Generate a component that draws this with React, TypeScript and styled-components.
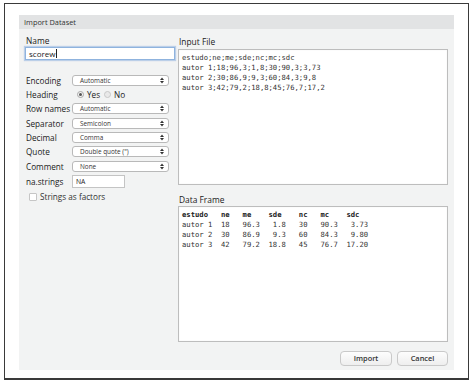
import * as React from 'react'
import styled, { createGlobalStyle } from 'styled-components'

const GlobalStyle = createGlobalStyle`
  html, body {
    margin: 0;
    padding: 0;
    background: #ffffff;
  }
  * {
    box-sizing: border-box;
  }
`

const Frame = styled.div`
  margin: 3px 0 0 4px;
  width: 465px;
  height: 377px;
  border: 1px solid #3a3a3a;
  border-bottom-width: 2px;
  background: #fff;
  padding: 11px 14px 8px 14px;
  font-family: 'Open Sans', 'DejaVu Sans', sans-serif;
  color: #222;
`

const Panel = styled.div`
  display: flex;
  flex-direction: column;
  height: 100%;
  background: #f2f3f3;
`

const TitleBar = styled.div`
  height: 14px;
  line-height: 14px;
  background: #e2e3e4;
  font-size: 7.4px;
  padding-left: 5px;
  color: #333;
`

const Body = styled.div`
  display: flex;
  padding: 6px 6px 0 6px;
`

const LeftCol = styled.div`
  width: 150px;
  display: flex;
  flex-direction: column;
`

const RightCol = styled.div`
  flex: 1;
  margin-left: 3px;
  display: flex;
  flex-direction: column;
`

const SectionLabel = styled.div<{ $top?: number; $h: number }>`
  height: ${props => props.$h}px;
  line-height: ${props => props.$h}px;
  margin-top: ${props => props.$top || 0}px;
  font-size: 8.4px;
  padding-left: 1px;
  color: #1a1a1a;
`

const NameInput = styled.div`
  height: 13px;
  border: 1px solid #8fb3de;
  box-shadow: 0 0 1px 1px rgba(120, 165, 220, 0.45);
  background: #fff;
  font-size: 8px;
  line-height: 11px;
  padding-left: 3px;
  display: flex;
  align-items: center;
`

const Caret = styled.span`
  display: inline-block;
  width: 1px;
  height: 9px;
  background: #222;
  margin-left: 1px;
`

const Form = styled.div`
  margin-top: 13px;
  display: grid;
  grid-template-columns: 47px 1fr;
  grid-auto-rows: 14.33px;
  align-items: center;
`

const RowLabel = styled.div`
  font-size: 8.2px;
  padding-left: 1px;
  white-space: nowrap;
  color: #1a1a1a;
`

const Select = styled.div`
  width: 97px;
  height: 11px;
  border: 1px solid #b9b9b9;
  border-radius: 3px;
  background: #fff;
  font-size: 6.4px;
  line-height: 9px;
  padding-left: 7px;
  display: flex;
  align-items: center;
  justify-content: space-between;
  color: #333;
`

const Arrows = styled.svg`
  margin-right: 4px;
`

const RadioGroup = styled.div`
  display: flex;
  align-items: center;
  padding-left: 5px;
  font-size: 8.2px;
`

const Radio = styled.span<{ $on?: boolean }>`
  width: 7px;
  height: 7px;
  border-radius: 50%;
  border: 1px solid ${props => (props.$on ? '#a8a8a8' : '#c8c8c8')};
  background: ${props => (props.$on ? '#f4f4f4' : '#e9e9e9')};
  display: inline-flex;
  align-items: center;
  justify-content: center;
  margin-right: 3px;
  &::after {
    content: '';
    width: 3px;
    height: 3px;
    border-radius: 50%;
    background: ${props => (props.$on ? '#555' : 'transparent')};
  }
`

const RadioText = styled.span`
  margin-right: 4px;
`

const SmallInput = styled.div`
  width: 53px;
  height: 13px;
  border: 1px solid #c4c4c4;
  background: #fff;
  font-size: 6.8px;
  line-height: 11px;
  padding-left: 3px;
  color: #222;
`

const NaRow = styled.div`
  display: grid;
  grid-template-columns: 47px 1fr;
  align-items: center;
  height: 15px;
  margin-top: 0.7px;
`

const CheckRow = styled.div`
  display: flex;
  align-items: center;
  height: 16px;
  padding-left: 4px;
  font-size: 8.2px;
  color: #333;
`

const Checkbox = styled.span`
  width: 8px;
  height: 8px;
  border: 1px solid #c6c6c6;
  border-radius: 1px;
  background: #fff;
  margin-right: 3px;
`

const TextBox = styled.pre`
  margin: 0;
  height: 136px;
  border: 1px solid #bdbdbd;
  box-shadow: inset 0 0 1px rgba(0, 0, 0, 0.12);
  background: #fff;
  padding: 3px 3px;
  font-family: 'DejaVu Sans Mono', 'Liberation Mono', monospace;
  font-size: 7.2px;
  line-height: 10px;
  color: #333;
  overflow: hidden;
`

const HeadLine = styled.span`
  font-weight: bold;
  color: #222;
`

const Footer = styled.div`
  display: flex;
  justify-content: flex-end;
  gap: 5px;
  padding: 9px 6px 0 0;
`

const Button = styled.div<{ $w: number }>`
  width: ${props => props.$w}px;
  height: 15px;
  border: 1px solid #c9c9c9;
  border-radius: 4px;
  background: linear-gradient(#fdfdfd, #eeeeee);
  font-size: 7.4px;
  font-weight: 600;
  line-height: 13px;
  text-align: center;
  color: #333;
`

const selectRows: [string, string][] = [
  ['Row names', 'Automatic'],
  ['Separator', 'Semicolon'],
  ['Decimal', 'Comma'],
  ['Quote', 'Double quote (")'],
  ['Comment', 'None'],
]

const inputFile = [
  'estudo;ne;me;sde;nc;mc;sdc',
  'autor 1;18;96,3;1,8;30;90,3;3,73',
  'autor 2;30;86,9;9,3;60;84,3;9,8',
  'autor 3;42;79,2;18,8;45;76,7;17,2',
]

const frameHeader = 'estudo   ne   me    sde    nc   mc    sdc'
const frameRows = [
  'autor 1  18   96.3   1.8   30   90.3   3.73',
  'autor 2  30   86.9   9.3   60   84.3   9.80',
  'autor 3  42   79.2  18.8   45   76.7  17.20',
]

const SelectBox = ({ value }: { value: string }): JSX.Element => (
  <Select>
    <span>{value}</span>
    <Arrows width="4" height="7" viewBox="0 0 4 7">
      <path d="M0 3 L2 0.5 L4 3 Z" fill="#333" />
      <path d="M0 4 L2 6.5 L4 4 Z" fill="#333" />
    </Arrows>
  </Select>
)

export default function App(): JSX.Element {
  return (
    <>
      <GlobalStyle />
      <Frame>
        <Panel>
          <TitleBar>Import Dataset</TitleBar>
          <Body>
            <LeftCol>
              <SectionLabel $h={12}>Name</SectionLabel>
              <NameInput>
                scorew
                <Caret />
              </NameInput>
              <Form>
                <RowLabel>Encoding</RowLabel>
                <SelectBox value="Automatic" />
                <RowLabel>Heading</RowLabel>
                <RadioGroup>
                  <Radio $on />
                  <RadioText>Yes</RadioText>
                  <Radio />
                  <RadioText>No</RadioText>
                </RadioGroup>
                {selectRows.map(([label, value]) => (
                  <React.Fragment key={label}>
                    <RowLabel>{label}</RowLabel>
                    <SelectBox value={value} />
                  </React.Fragment>
                ))}
              </Form>
              <NaRow>
                <RowLabel>na.strings</RowLabel>
                <SmallInput>NA</SmallInput>
              </NaRow>
              <CheckRow>
                <Checkbox />
                Strings as factors
              </CheckRow>
            </LeftCol>
            <RightCol>
              <SectionLabel $h={14}>Input File</SectionLabel>
              <TextBox>{inputFile.join('\n')}</TextBox>
              <SectionLabel $h={13} $top={8}>
                Data Frame
              </SectionLabel>
              <TextBox>
                <HeadLine>{frameHeader}</HeadLine>
                {'\n' + frameRows.join('\n')}
              </TextBox>
            </RightCol>
          </Body>
          <Footer>
            <Button $w={52}>Import</Button>
            <Button $w={51}>Cancel</Button>
          </Footer>
        </Panel>
      </Frame>
    </>
  )
}
